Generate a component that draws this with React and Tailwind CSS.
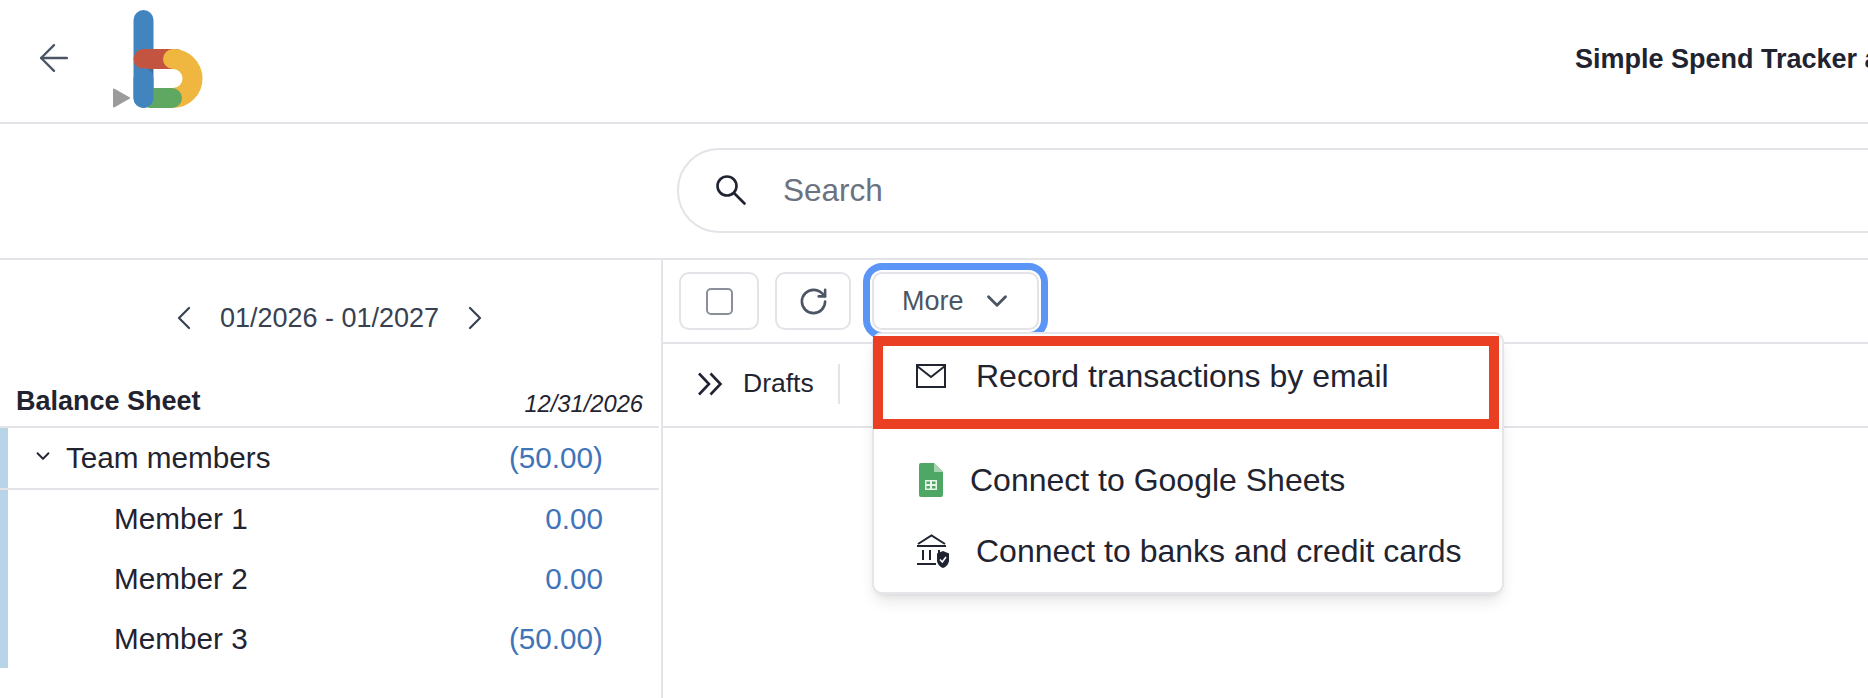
import React from 'react'
import { ArrowLeft, ChevronDown, ChevronLeft, ChevronRight, RotateCw } from 'lucide-react'

function Logo() {
  return (
    <svg width="100" height="110" viewBox="110 5 100 110" className="shrink-0">
      <path d="M114 89.5 L129 98 L114 106.5 Z" fill="#9b9b9b" stroke="#9b9b9b" strokeWidth="2" strokeLinejoin="round" />
      <path d="M143.5 20 V98" stroke="#4285BE" strokeWidth="20" strokeLinecap="round" />
      <path d="M139 69 H153 V90 Z" fill="#3E6F9F" />
      <path d="M143.5 59 H176" stroke="#C25440" strokeWidth="20" strokeLinecap="round" />
      <path d="M173 59 A19.5 19.5 0 0 1 173 98 L172 98" fill="none" stroke="#EFB740" strokeWidth="20" />
      <path d="M173 59 H174" stroke="#EFB740" strokeWidth="20" strokeLinecap="round" />
      <path d="M150 98 H172" stroke="#5FA862" strokeWidth="20" strokeLinecap="round" />
      <path d="M143.5 78 V98" stroke="#4285BE" strokeWidth="20" strokeLinecap="round" />
    </svg>
  )
}

function SearchIcon() {
  return (
    <svg width="30" height="30" viewBox="0 0 30 30" fill="none" stroke="#1f2430" strokeWidth="2.6" strokeLinecap="round">
      <circle cx="11" cy="11" r="9.5" />
      <path d="M18 18 L28.5 28.5" />
    </svg>
  )
}

function DoubleChevron() {
  return (
    <svg width="26" height="24" viewBox="0 0 26 24" fill="none" stroke="#1f2430" strokeWidth="2.6">
      <path d="M2 1.5 L12 12 L2 22.5" />
      <path d="M13.5 1.5 L23.5 12 L13.5 22.5" />
    </svg>
  )
}

function MailIcon() {
  return (
    <svg width="30" height="24" viewBox="0 0 30 24" fill="none" stroke="#1f2430" strokeWidth="2">
      <rect x="1" y="1" width="28" height="22" />
      <path d="M1 2 L15 13 L29 2" />
    </svg>
  )
}

function SheetsIcon() {
  return (
    <svg width="24" height="34" viewBox="0 0 24 34">
      <path d="M2 0 H15 L24 9 V32 A2 2 0 0 1 22 34 H2 A2 2 0 0 1 0 32 V2 A2 2 0 0 1 2 0 Z" fill="#4FA765" />
      <path d="M15 0 L24 9 H15 Z" fill="#A6D5B1" />
      <path d="M6 17 H18 V27 H6 Z M7.5 18.5 V21 H11 V18.5 Z M13 18.5 V21 H16.5 V18.5 Z M7.5 23 V25.5 H11 V23 Z M13 23 V25.5 H16.5 V23 Z" fill="#E8F5EB" fillRule="evenodd" />
    </svg>
  )
}

function BankIcon() {
  return (
    <svg width="33" height="34" viewBox="0 0 33 34" fill="none" stroke="#1f2430">
      <path d="M2 10 L15.5 1.5 L29 10" strokeWidth="2" />
      <path d="M1 12 H30" strokeWidth="2" />
      <path d="M7 16 V26 M14 16 V26 M23 16 V20" strokeWidth="2" />
      <path d="M1 30 H20" strokeWidth="2" />
      <path d="M27 17 L33 19.5 V26 C33 30 30 33 27 34 C24 33 21 30 21 26 V19.5 Z" fill="#1f2430" stroke="none" />
      <path d="M24 25.5 L26.3 28 L30 23" stroke="#fff" strokeWidth="1.6" />
    </svg>
  )
}

const MEMBERS = [
  { name: 'Member 1', value: '0.00' },
  { name: 'Member 2', value: '0.00' },
  { name: 'Member 3', value: '(50.00)' }
]

export default function App() {
  return (
    <div className="w-[1868px] h-[698px] overflow-hidden bg-white text-[#1f2430] font-['Liberation_Sans',Arial,sans-serif]">
      <header className="h-[124px] flex items-center border-b-2 border-[#e3e3e8] overflow-hidden">
        <ArrowLeft size={44} strokeWidth={1.3} className="ml-[32px] shrink-0 mb-[6px] text-[#4b5563]" />
        <div className="ml-[34px] mt-[-2px] shrink-0"><Logo /></div>
        <div className="ml-[1365px] mb-[3px] text-[27px] font-bold whitespace-nowrap">Simple Spend Tracker and more</div>
      </header>

      <div className="h-[136px] border-b-2 border-[#e3e3e8] pl-[677px] pt-[24px]">
        <div className="h-[85px] w-[1400px] rounded-[42px] border-2 border-[#e3e3e8] flex items-center">
          <span className="ml-[37px] mt-[-1px]"><SearchIcon /></span>
          <span className="ml-[37px] mt-[1px] text-[31.5px] text-[#6b7280]">Search</span>
        </div>
      </div>

      <div className="flex h-[438px]">
        <aside className="w-[661px] shrink-0 pr-[2px]">
          <div className="h-[116px] flex items-center justify-center text-[#374151]">
            <ChevronLeft size={40} strokeWidth={1.3} />
            <span className="mx-[16px] text-[27px]">01/2026 - 01/2027</span>
            <ChevronRight size={40} strokeWidth={1.3} />
          </div>
          <div className="h-[52px] flex items-end justify-between border-b-2 border-[#e3e3e8] pl-[16px] pr-[16px] pb-[3px]">
            <span className="text-[27px] font-bold leading-[40px] mb-[2px]">Balance Sheet</span>
            <span className="text-[23.7px] italic">12/31/2026</span>
          </div>
          <div className="h-[62px] flex border-b-2 border-[#e3e3e8]">
            <div className="w-2 bg-[#b8d4e8]" />
            <ChevronDown size={22} strokeWidth={2} className="ml-[24px] mt-[17px]" />
            <span className="ml-[12px] text-[29.7px] leading-[60px]">Team members</span>
            <span className="ml-auto mr-[56px] text-[29.7px] leading-[60px] text-[#3f74b8]">(50.00)</span>
          </div>
          <div className="h-[178px] flex">
            <div className="w-2 bg-[#b8d4e8]" />
            <div className="flex-1">
              {MEMBERS.map((m) => (
                <div key={m.name} className="h-[60px] flex items-center pb-[2px]">
                  <span className="ml-[106px] text-[29.7px]">{m.name}</span>
                  <span className="ml-auto mr-[56px] text-[29.7px] text-[#3f74b8]">{m.value}</span>
                </div>
              ))}
            </div>
          </div>
        </aside>

        <main className="flex-1 border-l-2 border-[#e3e3e8] relative">
          <div className="h-[84px] flex items-start pt-[12px] pl-[16px] border-b-2 border-[#e3e3e8]">
            <button className="w-[80px] h-[58px] rounded-[10px] border-2 border-[#e3e3e8] flex items-center justify-center">
              <span className="w-[27px] h-[27px] rounded-[5px] border-2 border-[#8b8f99]" />
            </button>
            <button className="w-[76px] h-[58px] ml-[16px] rounded-[10px] border-2 border-[#e3e3e8] flex items-center justify-center text-[#4b5563]">
              <RotateCw size={31} strokeWidth={2} />
            </button>
            <button className="w-[167px] h-[58px] ml-[21px] rounded-[10px] border-2 border-[#e3e3e8] outline-[7px] outline-[#5b96f7] outline-offset-[2px] flex items-center pl-[28px] text-[27px] text-[#4b5563]">
              More
              <ChevronDown size={34} strokeWidth={2} className="ml-[16px]" />
            </button>
          </div>
          <div className="h-[84px] flex items-center pb-[2px] border-b-2 border-[#e3e3e8]">
            <span className="ml-[34px]"><DoubleChevron /></span>
            <span className="ml-[20px] text-[26.5px]">Drafts</span>
            <span className="ml-[24px] w-[2px] h-[40px] bg-[#e3e3e8]" />
          </div>

          {/* menu lies over the toolbar */}
          <div className="absolute left-[209px] top-[72px] w-[632px] h-[262px] bg-white rounded-[10px] border-2 border-[#e5e5ea] shadow-lg text-[32px]">
            <div className="h-[91px] flex items-center pl-[42px] pb-[8px]">
              <MailIcon />
              <span className="ml-[30px] whitespace-nowrap">Record transactions by email</span>
            </div>
            <div className="flex items-center h-[34px] mt-[38px] pl-[45px]">
              <SheetsIcon />
              <span className="ml-[27px] whitespace-nowrap">Connect to Google Sheets</span>
            </div>
            <div className="flex items-center h-[34px] mt-[37px] pl-[42px]">
              <BankIcon />
              <span className="ml-[27px] whitespace-nowrap">Connect to banks and credit cards</span>
            </div>
            {/* red highlight */}
            <div className="absolute left-[-1px] top-[2px] w-[626px] h-[93px] border-[10px] border-[#ea3f23]" />
          </div>
        </main>
      </div>
    </div>
  )
}
